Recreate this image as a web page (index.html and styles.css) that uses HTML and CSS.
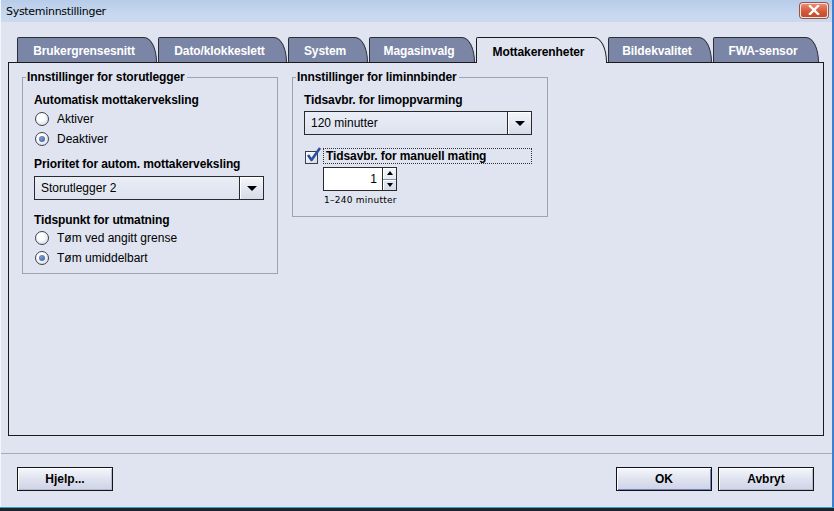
FILE: index.html
```html
<!DOCTYPE html>
<html lang="no">
<head>
<meta charset="utf-8">
<title>Systeminnstillinger</title>
<link rel="stylesheet" href="styles.css">
</head>
<body>
<div class="window">
  <div class="titlebar">
    <span class="title">Systeminnstillinger</span>
    <span class="close">
      <svg width="14" height="10" viewBox="0 0 14 10"><path d="M3 1 L11 9 M11 1 L3 9" stroke="#fff" stroke-width="2.4" stroke-linecap="square"/></svg>
    </span>
  </div>
  <div class="body">
    <div class="tabs">
      <div class="tab t1">Brukergrensesnitt</div>
      <div class="tab t2">Dato/klokkeslett</div>
      <div class="tab t3">System</div>
      <div class="tab t4">Magasinvalg</div>
      <div class="tab t5 active">Mottakerenheter</div>
      <div class="tab t6">Bildekvalitet</div>
      <div class="tab t7">FWA-sensor</div>
    </div>
    <div class="panel">
      <fieldset class="group g1">
        <legend>Innstillinger for storutlegger</legend>
        <div class="label first">Automatisk mottakerveksling</div>
        <div class="radio-row top"><span class="radio"></span>Aktiver</div>
        <div class="radio-row"><span class="radio on"></span>Deaktiver</div>
        <div class="label mid">Prioritet for autom. mottakerveksling</div>
        <div class="combo c1"><span class="combo-text">Storutlegger 2</span><span class="combo-btn"><span class="tri"></span></span></div>
        <div class="label mid2">Tidspunkt for utmatning</div>
        <div class="radio-row"><span class="radio"></span>Tøm ved angitt grense</div>
        <div class="radio-row"><span class="radio on"></span>Tøm umiddelbart</div>
      </fieldset>
      <fieldset class="group g2">
        <legend>Innstillinger for liminnbinder</legend>
        <div class="label first">Tidsavbr. for limoppvarming</div>
        <div class="combo c2"><span class="combo-text">120 minutter</span><span class="combo-btn"><span class="tri"></span></span></div>
        <div class="check-row">
          <span class="checkbox">
            <svg width="17" height="17" viewBox="0 0 17 17"><path d="M3 8 L6.5 13 L15 1" fill="none" stroke="#2b4f9e" stroke-width="2.6" stroke-linejoin="round"/></svg>
          </span>
          <span class="check-label">Tidsavbr. for manuell mating</span>
        </div>
        <div class="spinner">
          <span class="spin-field">1</span>
          <span class="spin-btns">
            <span class="spin-up"><span class="tri-up"></span></span>
            <span class="spin-down"><span class="tri-down"></span></span>
          </span>
        </div>
        <div class="hint">1–240 minutter</div>
      </fieldset>
    </div>
    <div class="sep"></div>
    <div class="buttons">
      <button class="btn">Hjelp...</button>
      <div class="spacer"></div>
      <button class="btn ok">OK</button>
      <button class="btn">Avbryt</button>
    </div>
  </div>
  <div class="frame-bottom"></div>
</div>
</body>
</html>
```
FILE: styles.css
```css
* { box-sizing: border-box; }
html, body { margin: 0; padding: 0; }
body {
  width: 834px;
  height: 511px;
  overflow: hidden;
  font-family: "Liberation Sans", Arial, sans-serif;
  font-size: 12px;
  color: #000;
  background: #1c2430;
}
.window {
  width: 834px;
  height: 511px;
  display: flex;
  flex-direction: column;
  background: #dfe4f0;
  border-left: 1px solid #f2f5fb;
  border-right: 2px solid #3f7fcf;
}
.titlebar {
  height: 22px;
  flex: none;
  display: flex;
  align-items: center;
  padding-left: 5px;
  padding-right: 4px;
  background: linear-gradient(#b7cce9, #c6d7ef 60%, #c9daf0);
}
.title {
  flex: 1;
  font-family: "DejaVu Sans", "Liberation Sans", sans-serif;
  font-size: 11px;
  letter-spacing: -0.3px;
  color: #000;
}
.close {
  width: 28px;
  height: 15px;
  margin-top: -2px;
  border: 1px solid #f4e6e2;
  border-radius: 3px;
  background: linear-gradient(#e98a72, #d45a3c 55%, #c14a2e);
  box-shadow: 0 0 0 1px #a05040;
  display: flex;
  align-items: center;
  justify-content: center;
}
.body {
  flex: 1;
  display: flex;
  flex-direction: column;
  padding: 15px 8px 0 7px;
}
.tabs {
  display: flex;
  gap: 1px;
  height: 25px;
  margin-left: 9px;
  position: relative;
  z-index: 1;
}
.tab {
  height: 25px;
  background: #7b86a6;
  color: #fff;
  font-weight: bold;
  font-size: 12px;
  letter-spacing: -0.1px;
  border: 1px solid #2a2e3a;
  border-bottom: none;
  border-top-left-radius: 2px;
  border-top-right-radius: 13px 25px;
  display: flex;
  align-items: center;
  justify-content: center;
  padding-right: 6px;
  padding-top: 2px;
}
.tab.active {
  background: #dfe4f0;
  color: #000;
  height: 26px;
  border-color: #1a1a1a;
}
.t1 { width: 140px; }
.t2 { width: 129px; }
.t3 { width: 80px; }
.t4 { width: 106px; }
.t5 { width: 131px; }
.t6 { width: 104px; }
.t7 { width: 106px; }
.panel {
  height: 374px;
  border: 1px solid #1a1a1a;
  display: flex;
  align-items: flex-start;
  gap: 14px;
  padding: 7px 0 0 13px;
  background: #dfe4f0;
}
.group {
  margin: 0;
  width: 256px;
  border: 1px solid #9ea3b3;
  padding: 0 10px 5px 11px;
  display: flex;
  flex-direction: column;
  min-width: 0;
}
.group legend {
  font-weight: bold;
  font-size: 12px;
  line-height: 14px;
  padding: 0 2px 0 1px;
  margin-left: -8px;
  letter-spacing: -0.1px;
}
.label {
  font-weight: bold;
  line-height: 15px;
  letter-spacing: -0.1px;
}
.label.first { margin-top: 9px; }
.label.mid { margin-top: 8px; }
.label.mid2 { margin-top: 13px; }
.radio-row {
  height: 20px;
  display: flex;
  align-items: center;
  gap: 8px;
  padding-left: 1px;
}
.radio-row.top { margin-top: 1px; }
.radio {
  width: 14px;
  height: 14px;
  border-radius: 50%;
  border: 1px solid #3e424e;
  background: radial-gradient(circle at 40% 35%, #ffffff 30%, #cdd2de 100%);
  display: flex;
  align-items: center;
  justify-content: center;
  flex: none;
}
.radio.on::after {
  content: "";
  width: 6px;
  height: 6px;
  border-radius: 50%;
  background: radial-gradient(circle at 40% 35%, #7f9ad0, #3a5a9e);
}
.combo {
  height: 24px;
  margin-top: 4px;
  border: 1px solid #2a2a2a;
  display: flex;
  background: linear-gradient(#e9edf6, #dde3ef);
}
.combo.c1 { width: 230px; }
.combo.c2 { width: 228px; margin-top: 3px; }
.combo-text {
  flex: 1;
  display: flex;
  align-items: center;
  padding-left: 6px;
  font-size: 12px;
}
.combo-btn {
  width: 24px;
  border-left: 1px solid #2a2a2a;
  background: linear-gradient(#f4f6fb, #d6dbe8);
  box-shadow: inset 1px 1px #fff;
  display: flex;
  align-items: center;
  justify-content: center;
}
.tri {
  width: 0;
  height: 0;
  border-left: 5px solid transparent;
  border-right: 5px solid transparent;
  border-top: 5px solid #000;
  margin-top: 1px;
}
.check-row {
  margin-top: 13px;
  width: 228px;
  height: 16px;
  display: flex;
  align-items: center;
  gap: 5px;
  padding-left: 1px;
}
.checkbox {
  width: 13px;
  height: 13px;
  border: 1px solid #3a3e4a;
  background: linear-gradient(135deg, #ffffff, #d6dae4);
  position: relative;
  flex: none;
  margin-top: 2px;
}
.checkbox svg {
  position: absolute;
  left: -1px;
  top: -5px;
}
.check-label {
  flex: 1;
  height: 16px;
  border: 1px dotted #333;
  font-weight: bold;
  line-height: 14px;
  padding-left: 2px;
  letter-spacing: -0.1px;
}
.spinner {
  margin-top: 3px;
  margin-left: 19px;
  height: 24px;
  display: flex;
}
.spin-field {
  width: 60px;
  border: 1px solid #2a2a2a;
  background: #fff;
  display: flex;
  align-items: center;
  justify-content: flex-end;
  padding-right: 5px;
  font-size: 12px;
}
.spin-btns {
  width: 14px;
  border: 1px solid #2a2a2a;
  border-left: none;
  display: flex;
  flex-direction: column;
  background: linear-gradient(#f4f6fb, #d6dbe8);
}
.spin-up, .spin-down {
  flex: 1;
  display: flex;
  align-items: center;
  justify-content: center;
  box-shadow: inset 1px 1px #fff;
}
.spin-up { border-bottom: 1px solid #8a8e9a; }
.tri-up {
  width: 0; height: 0;
  border-left: 3px solid transparent;
  border-right: 3px solid transparent;
  border-bottom: 4px solid #000;
}
.tri-down {
  width: 0; height: 0;
  border-left: 3px solid transparent;
  border-right: 3px solid transparent;
  border-top: 4px solid #000;
}
.hint {
  margin-top: 3px;
  margin-left: 20px;
  font-family: "DejaVu Sans", sans-serif;
  font-size: 9px;
  letter-spacing: 0.25px;
  line-height: 13px;
  padding-bottom: 4px;
}
.sep {
  height: 1px;
  background: #a3aabf;
  margin: 17px -8px 0 -7px;
}
.buttons {
  display: flex;
  gap: 6px;
  margin-top: 13px;
  padding: 0 10px 0 9px;
}
.spacer { flex: 1; }
.btn {
  width: 96px;
  height: 24px;
  border: 1px solid #151515;
  background: linear-gradient(#f6f7fc, #dfe3f0 50%, #cdd2e6);
  box-shadow: inset 1px 1px #ffffff, inset -1px -1px #b4bad0;
  font-family: "Liberation Sans", Arial, sans-serif;
  font-weight: bold;
  font-size: 12px;
  color: #000;
  padding: 0;
}
.btn.ok { box-shadow: inset 1px 1px #ffffff, inset -1px -1px #7a84b0; border-color: #101020; }
.frame-bottom {
  margin-top: auto;
  height: 4px;
  border-top: 1px solid #2aa6d0;
  background: #1c2430;
  margin-left: -1px;
  margin-right: -2px;
}
```
